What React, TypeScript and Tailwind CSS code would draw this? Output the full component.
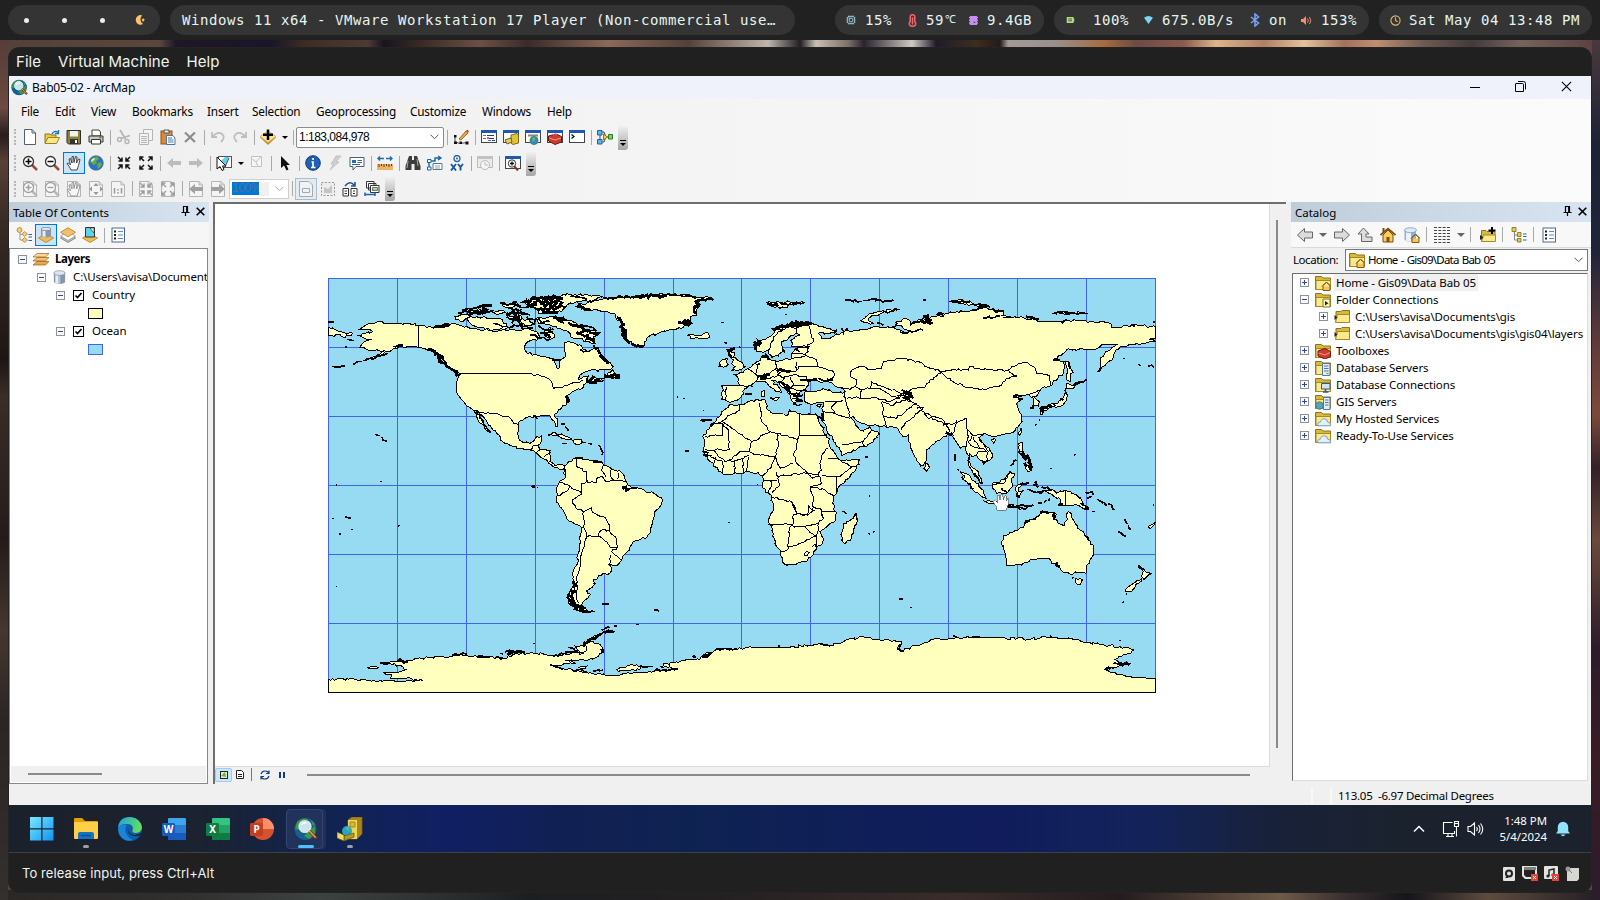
import React from "react";
import { Cpu, Clock } from "lucide-react";

type Kids = { children?: React.ReactNode };

/* ---------- world map ---------- */

type Region = { dx: number; dy: number; land: string[]; lines: string[]; specks: string[]; dense: string[] };

const regions: Region[] = [
  {
    dx: -24,
    dy: -24,
    land: [
      "150,160 170,157 187,155 205,160 240,160 296,166 320,172 345,170 365,165 395,161 420,166 440,170 455,175 480,180 500,176 520,185 545,180 575,178 600,183 625,176 640,182 655,192 665,206 640,208 620,218 613,232 622,250 650,255 680,262 700,266 704,278 712,296 720,292 718,272 735,262 738,250 735,235 733,218 745,215 765,220 785,228 790,240 805,245 822,235 835,250 850,268 870,278 880,290 862,300 805,303 780,315 775,328 790,320 805,318 800,332 820,342 855,325 830,325 818,318 808,330 790,345 782,358 765,362 750,372 740,382 744,395 738,405 715,420 705,432 712,455 714,470 706,470 697,450 690,437 665,437 645,440 620,442 600,452 595,470 593,490 598,510 610,518 630,520 643,510 650,500 665,498 665,512 655,525 660,540 690,542 692,560 690,575 705,587 718,583 735,587 730,598 705,592 685,580 670,565 650,550 630,540 600,537 565,522 540,510 538,495 520,480 505,465 490,440 478,430 460,420 440,408 425,390 412,372 410,350 412,330 422,312 400,300 385,288 370,270 350,255 330,242 310,235 296,233 270,230 245,228 225,235 205,245 170,260 130,272 170,255 190,243 150,240 120,232 128,220 155,208 130,203 112,196 135,190 158,185 148,177 120,177 130,170",
      "462,422 475,432 485,450 498,470 510,486 500,482 485,462 473,445",
      "765,108 800,100 840,88 870,82 930,82 980,75 1040,72 1080,75 1120,80 1180,86 1140,92 1125,100 1140,108 1128,120 1130,135 1110,140 1110,160 1090,172 1050,178 1015,190 985,200 968,232 945,225 925,212 905,185 910,165 890,150 885,132 860,124 820,120 785,118",
      "1100,197 1110,192 1130,195 1165,190 1170,200 1145,207 1120,205",
      "605,97 640,88 690,80 750,73 810,77 850,80 810,92 770,95 740,105 725,125 690,130 655,130 650,115 630,105",
      "648,145 680,142 700,140 740,150 780,165 800,180 840,188 820,200 825,220 800,215 780,205 760,205 745,185 720,175 690,165 655,160",
      "440,145 470,140 540,145 550,160 570,175 520,180 480,172 455,165",
      "405,140 435,132 450,140 430,155 408,150",
      "565,142 600,135 605,155 580,152",
      "600,150 625,148 640,160 615,170",
      "668,190 690,172 705,200 690,208",
      "855,318 878,300 885,312 900,315 898,325 870,320",
      "25,173 60,183 98,190 75,203 55,195 25,198",
      "683,495 705,487 730,495 755,507 735,507 715,497",
      "758,512 775,508 798,517 780,522 762,520",
      "545,105 570,100 590,105 570,115",
      "445,125 480,118 500,128 470,132",
      "520,128 550,122 560,130 535,133",
    ],
    lines: [
      "422,310 520,310",
      "520,310 615,310 640,315 670,318 695,335 700,355 730,350 770,338 790,330",
      "462,420 490,428 525,430 545,438 565,440 580,460 595,465",
      "630,540 640,525 655,525",
      "660,540 648,548",
      "672,562 692,545",
      "296,166 296,185",
      "296,185 296,233",
    ],
    specks: [
      "425,120 445,115 470,117", "540,100 560,104 595,102", "455,128 520,124", "560,112 605,118", "575,128 605,128 630,135", "600,110 640,112 655,122", "620,140 645,150 640,165", "655,145 665,160 690,155", "655,165 680,180 700,176", "700,145 730,142 740,152", "775,192 800,200 815,212", "770,165 800,168 830,182", "520,160 560,170", "590,120 600,160 610,180", "575,98 590,97", "630,195 660,203 690,208", "770,110 800,116 815,122", "950,80 1010,74 1070,76", "850,83 950,80", "1060,72 1130,82", "1130,90 1180,86", "560,140 590,150 575,160", "570,170 600,165 640,175", "700,110 735,108", "750,80 800,88",
      "345,240 372,262", "135,270 205,250", "100,283 125,275", "36,290 75,288", "25,156 42,156", "220,228 250,226", "80,208 102,212", "74,230 80,231", "740,375 745,400", "640,437 652,446", "695,270 722,270", "820,225 850,262", "800,325 812,340 850,330", "865,318 900,320", "470,425 490,465", "495,475 512,488", "166,493 180,497", "186,502 200,514", "722,462 735,462", "735,470 745,482", "727,520 742,521", "803,520 815,522", "835,525 845,540 846,555", "183,634 187,634", "48,645 50,645", "635,648 645,652", "765,565 790,562", "820,575 845,575", "905,655 950,655", "1070,381 1074,381", "1088,385 1094,385", "1096,543 1106,544", "1205,157 1212,157", "1148,421 1152,422", "1142,450 1155,455", "1213,217 1220,219", "415,128 440,122", "780,238 800,244", "660,190 700,186",
    ],
    dense: [
      "470,110 490,106 515,106", "485,115 505,122", "612,94 650,86 700,80", "640,94 700,96 720,90", "660,100 690,106 715,98", "655,120 700,116 730,100", "665,128 715,128", "620,98 650,104", "665,88 730,86", "440,128 500,126", "560,128 590,132", "600,125 620,132", "575,148 600,145", "580,105 600,110", "700,146 735,150", "745,158 775,168",
      "890,142 905,155 915,165", "898,172 915,180 918,195 905,180", "905,190 915,205 928,215", "935,222 960,230 970,228",
      "1125,92 1140,108 1122,118 1128,132", "1075,158 1105,152 1112,160 1090,162", "950,79 1000,77 1040,76",
      "325,237 350,252 372,262", "350,262 375,280 392,294", "355,272 365,280", "392,296 420,314", "765,165 790,178 812,192", "790,200 820,210 822,218", "770,185 835,190", "820,320 815,338 840,330", "738,378 742,398", "855,312 895,320", "345,170 390,165", "770,110 810,118", "838,255 868,278", "672,195 690,205",
    ],
  },
  {
    dx: -24,
    dy: 546,
    land: [
      "735,17 745,5 760,-5 772,-8 790,0 815,2 845,5 850,15 870,22 905,37 920,65 930,78 955,85 985,97 1010,105 1027,122 1020,140 1003,163 997,190 992,215 978,235 940,245 930,262 918,280 905,300 892,316 865,312 875,325 870,340 835,348 830,358 820,360 825,372 812,385 800,392 812,403 795,420 785,435 800,450 770,450 750,435 745,415 748,395 760,370 758,340 770,315 775,280 780,240 785,203 765,192 742,178 725,145 708,115 710,95 715,72 735,55 733,30",
      "25,657 110,660 215,663 310,662 260,655 212,655 215,645 190,637 230,637 262,630 240,615 180,610 240,605 290,597 345,590 385,592 440,585 500,592 560,595 580,583 640,580 700,585 740,583 790,580 780,565 800,550 820,545 845,560 850,575 835,590 800,602 735,600 765,610 730,612 700,618 740,628 800,637 865,648 930,640 1000,635 1075,627 1020,620 1060,607 1110,600 1140,598 1155,585 1185,570 1300,562 1410,562 1500,550 1530,558 1570,545 1630,530 1680,540 1745,545 1732,570 1750,573 1790,555 1840,538 1960,532 2040,532 2110,537 2190,532 2260,538 2300,548 2400,560 2443,570 2410,585 2385,598 2400,612 2430,610 2355,628 2420,650 2506,656 2506,697 25,697",
      "890,630 930,615 965,618 960,628 920,633",
      "765,558 795,552 800,572 780,577",
      "140,622 160,619 175,624 155,625",
      "775,622 800,618 785,627",
      "965,618 1000,619 980,623",
      "800,540 830,525 850,520 825,535",
    ],
    lines: [
      "920,65 905,60 880,62 858,65 848,50 830,55 828,68 800,65 785,70 785,102 765,115 758,130 775,150 790,155 815,143 818,158 850,170 868,195 868,212 888,235 893,260 875,275 905,300",
      "712,105 722,105 745,90 750,78 720,68",
      "750,78 780,95 785,100",
      "768,-5 770,20 800,35 803,65",
      "850,15 845,32 858,50",
      "875,25 870,45 880,60",
      "895,40 893,58",
      "790,155 792,180 790,200 800,230 835,228 845,210 868,212",
      "785,203 792,200",
      "835,228 860,245 870,262 893,260",
      "800,232 790,265 780,290 780,320 770,350 772,380 768,400 775,430",
      "868,312 872,285",
      "735,28 735,55",
    ],
    specks: [
      "910,90 920,78", "762,362 765,400", "780,450 826,455", "818,370 828,370", "1003,449 1018,453", "948,493 956,493", "882,497 890,497", "845,510 870,503", "825,530 855,516 885,514", "745,562 765,568", "735,575 775,572", "700,590 740,580", "555,577 590,573 615,575", "560,582 580,580", "540,580 550,582", "395,585 440,583", "470,590 510,590", "525,594 550,593", "180,610 200,612", "640,550 646,550", "1005,630 1070,627", "820,632 850,630", "1120,590 1128,590", "1150,585 1175,580", "1200,567 1220,565", "235,197 238,199", "36,175 42,175", "76,171 92,175", "94,208 98,208", "57,221 62,223", "49,378 52,380", "181,64 186,64", "48,75 51,75", "650,82 655,82", "1225,187 1230,187", "690,615 730,625", "755,628 800,634",
    ],
    dense: [
      "905,84 930,86", "757,365 766,380", "750,392 752,420 765,435", "752,405 758,425", "748,400 750,432", "762,430 780,440 792,448", "758,432 775,446", "765,440 800,455", "847,432 866,432", "635,78 643,80", "800,542 815,536 840,524", "855,517 880,514", "565,577 605,574", "232,605 262,602", "845,566 848,580", "795,545 790,560",
    ],
  },
  {
    dx: 1086,
    dy: -24,
    land: [
      "95,347 125,347 150,347 145,325 130,313 150,308 165,300 185,290 195,280 212,272 215,258 228,255 232,270 255,272 280,270 305,265 305,250 315,238 335,232 355,234 360,228 335,230 305,230 302,212 330,195 318,190 295,205 275,215 278,235 265,258 245,262 235,240 220,248 200,245 190,225 215,210 240,200 255,180 290,165 330,160 365,158 380,165 410,175 440,182 435,190 400,188 385,190 395,205 420,205 440,192 460,185 490,183 520,178 545,173 600,172 625,178 645,188 660,182 640,176 618,158 640,146 658,150 660,168 670,155 700,145 750,138 790,128 850,120 880,113 940,122 935,138 960,140 1000,143 1050,155 1120,155 1150,150 1200,155 1255,158 1265,172 1300,168 1340,165 1396,170 1396,205 1380,208 1395,215 1370,218 1330,225 1290,230 1275,245 1270,262 1250,280 1230,295 1232,262 1260,240 1285,222 1240,222 1215,238 1180,238 1130,240 1105,258 1090,270 1120,275 1125,290 1120,310 1100,330 1080,348 1055,355 1045,370 1030,380 1048,395 1045,408 1030,405 1030,385 1015,373 990,378 975,380 998,385 980,400 985,418 995,435 992,460 975,482 950,490 925,497 910,500 885,490 868,505 880,520 900,535 908,555 900,570 880,583 870,570 860,555 848,560 838,550 840,580 850,595 865,605 875,635 870,640 855,620 845,600 835,585 838,560 830,545 828,530 810,535 795,510 790,495 775,490 760,500 735,520 708,540 708,560 705,578 692,588 675,560 660,520 655,495 640,500 625,478 610,472 570,470 545,467 525,462 505,455 490,440 483,442 495,460 510,480 520,483 540,470 545,480 568,492 550,515 520,530 490,540 455,557 450,540 430,510 410,480 395,450 400,430 395,415 400,398 380,398 360,402 345,395 342,375 345,366 375,365 405,358 440,368 466,366 460,358 440,350 420,338 410,332 385,335 370,325 355,335 350,350 345,362 330,365 320,375 325,395 310,398 300,375 290,360 270,345 255,330 245,330 265,350 275,368 258,365 240,350 225,335 205,335 185,345 165,355 155,375 140,392 120,397 110,393 95,390 93,370 100,360",
      "118,403 145,405 180,393 225,390 232,420 260,430 290,438 298,420 330,430 380,435 385,448 395,470 410,495 420,530 440,560 455,572 510,568 500,595 480,620 450,645 430,680 428,700 437,735 435,755 410,770 390,785 400,805 398,820 380,830 370,855 350,875 320,882 285,883 278,865 260,830 250,790 235,755 250,715 245,680 220,655 218,640 220,615 195,610 170,605 135,608 100,613 75,590 60,575 40,548 42,520 38,500 60,470 80,450 95,425 110,415",
      "120,245 135,250 130,262 150,275 165,290 155,298 125,302 135,290 125,280 130,270 118,260",
      "85,290 95,270 112,265 115,285 100,292",
      "512,152 540,130 580,122 630,117 600,125 555,135 535,145 550,160 530,158",
      "230,98 270,97 290,95 340,97 310,105 270,115 245,108",
      "778,95 810,87 845,97 900,112 860,108 800,98",
      "1090,130 1120,123 1150,127 1190,130 1140,132",
      "1125,275 1135,275 1150,308 1140,310 1140,335 1130,330 1132,300",
      "1130,340 1155,345 1172,338 1150,355 1130,355",
      "1125,355 1132,375 1120,405 1090,410 1060,420 1050,415 1075,405 1095,400 1115,388 1125,370",
      "1050,415 1062,420 1058,433 1050,432",
      "985,490 993,473 995,485 988,497",
      "903,510 918,508 912,520",
      "985,520 998,518 995,545 1005,552 990,545",
      "1008,590 1025,580 1025,600 1015,605",
      "705,578 718,592 710,603 702,595",
      "812,606 830,612 855,635 880,660 888,685 875,680 850,660 830,635",
      "907,640 930,637 960,605 975,612 965,635 968,650 955,665 945,672 920,670 908,655",
      "243,385 268,383 260,392", "215,365 222,362 222,378 215,378", "380,408 395,403 388,412", "310,402 335,404 322,406",
    ],
    lines: [
      "148,405 150,420 120,435 95,455 65,460", "60,470 72,460 98,460 98,495 45,500", "98,460 115,480 118,538 62,540", "98,455 185,515 240,485 215,455 210,400", "240,485 262,490 322,508 328,495 328,430", "328,495 412,495", "322,508 320,535 310,555 320,580 350,608 385,615 395,600 390,580 400,550 415,535", "185,515 178,545 150,545 118,570 105,575 75,545 45,540", "178,545 195,555 255,560 265,530 262,490", "255,560 245,590 220,615", "255,560 270,595 310,580", "258,605 265,620 320,612 350,610 365,625", "265,620 270,645 245,670", "220,632 260,632", "415,565 440,565 455,575 485,590 500,590", "485,590 455,615 440,620 395,615", "440,620 440,665", "365,625 390,620 395,640 362,650 370,690", "362,650 405,660 432,680", "245,683 275,688 305,695 320,730 345,735",
      "100,575 98,613", "135,572 132,608", "158,568 160,605", "175,560 170,605", "75,560 72,590", "60,560 85,572 100,575", "105,575 135,572 165,560 178,555", "240,630 245,645 235,665",
      "495,350 500,330 480,315 485,300 510,290 540,298 575,295 580,275 635,265 685,275 715,292 755,305", "755,305 790,298 835,300 840,288 870,297 920,302 955,300 985,280 1010,278 1030,290 1040,310 1080,318 1082,345", "755,308 790,335 830,352 885,360 935,345 950,325 980,318 960,308 955,300", "755,305 710,340 705,352 670,355 640,370 665,375", "640,370 665,395 690,410 710,440 760,460 790,462 830,445 830,475 848,495 885,490", "540,355 545,335 590,355 620,365 640,370", "495,350 515,360 510,385", "515,360 540,355 570,355 610,380 630,385", "510,385 560,383 600,395 625,385", "440,350 480,358 495,350", "460,365 470,400 480,440", "470,385 500,380 510,385", "575,395 580,440 590,470", "575,395 600,405 650,390 665,395", "580,440 620,445 650,420 680,400", "680,415 700,412 665,445 645,460 635,480", "405,395 440,395 460,390", "400,425 435,430 480,445", "435,430 425,410 440,395", "455,525 480,520 520,515 545,480", "518,515 525,530", "830,475 835,500 830,530", "850,500 865,530 890,545", "865,500 880,520 895,545 890,575", "765,460 780,485 775,470", "800,450 790,490", "848,495 835,515 850,530 870,535", "860,555 865,545 890,545", "710,440 705,430 760,450 765,460", "625,385 640,370 650,362", "620,375 665,380", "1015,373 1045,360",
      "150,347 190,350", "175,298 205,320 200,335", "205,280 200,310", "255,272 260,295 240,310 205,318", "260,295 300,305 318,303 320,275", "205,320 240,325 260,318 285,320", "318,303 325,290 385,290 430,305 435,315 410,332", "285,320 310,315 350,320 355,335", "290,345 320,362 345,358", "305,250 345,255 355,245 350,230 370,215 355,165", "345,255 380,270 385,290", "240,240 245,215 265,185 300,170 320,175 320,190", "355,165 320,172", "108,350 105,390", "285,320 275,335 290,345", "300,320 310,345 290,360", "305,265 345,260", "260,320 270,308 318,303", "310,345 345,345", "908,645 940,640 960,610",
    ],
    specks: [
      "465,90 515,94", "520,92 560,85", "555,95 610,90", "700,89 708,90", "270,98 300,102 345,97", "245,178 280,176", "665,160 700,148", "690,150 730,160", "845,118 885,112", "865,103 895,108", "905,120 940,125", "930,138 880,145", "940,142 970,142", "785,92 840,95", "1100,124 1130,130 1195,130", "1115,160 1130,148", "1320,168 1335,170", "630,185 655,188", "625,160 615,170", "455,175 460,195", "465,180 475,175", "660,183 700,180", "560,160 580,165", "225,252 240,268", "120,255 128,265", "88,280 92,290", "265,335 285,348", "285,350 300,372", "300,370 325,372", "305,385 340,375", "320,380 340,395", "240,382 250,388", "165,372 185,372", "200,285 210,280", "150,230 148,235", "100,157 94,157", "105,217 110,219", "280,238 284,250", "315,235 330,245", "330,330 380,330", "385,325 400,332 430,328", "38,421 42,422", "33,450 65,450", "35,545 55,550", "45,560 65,556", "635,360 650,372 665,370", "640,365 670,378", "645,380 670,385", "760,465 775,462", "795,553 794,573", "525,560 533,561", "1138,275 1140,295", "1150,345 1190,328", "1125,360 1128,372", "1090,400 1095,408", "1055,410 1065,415 1085,408", "1030,405 1020,415", "985,545 998,555", "980,570 962,588", "1085,593 1082,597", "1153,553 1156,556", "1035,465 1040,462", "1046,452 1050,448", "1298,265 1304,267", "1345,283 1352,288", "1375,288 1392,292", "1220,305 1235,293", "1390,155 1396,157", "975,375 995,380", "985,390 1000,388", "880,575 895,570", "800,598 808,600", "815,620 820,628", "830,640 850,658", "855,610 868,630", "935,655 950,665", "435,185 440,178", "285,133 290,133", "1090,268 1110,270", "540,677 538,680", "200,643 205,644", "400,425 398,445", "380,436 395,445", "395,430 403,452", "1110,385 1120,390", "605,170 615,170",
    ],
    dense: [
      "232,100 262,108", "250,180 280,170 310,164", "290,164 330,160 365,160", "192,215 215,222", "190,222 196,240", "700,140 725,150", "740,136 760,134", "690,152 728,158", "1010,145 1045,150", "215,258 235,260", "110,242 132,240", "115,250 124,262", "308,378 335,378", "318,388 335,392", "40,553 55,556", "640,366 662,368", "768,487 788,490", "1000,548 1010,570", "1005,562 1020,580", "995,552 1003,565", "1015,575 1024,592", "1003,578 1012,590", "1010,555 1022,572", "1015,585 1020,600", "1090,268 1108,270", "1052,412 1060,428", "290,345 296,360", "210,325 240,315", "260,305 300,300", "640,380 660,388", "300,168 345,164", "970,380 980,378",
    ],
  },
  {
    dx: 1086,
    dy: 516,
    land: [
      "497,190 502,205 490,240 482,270 465,282 455,270 458,240 460,222 485,208",
      "1065,122 1085,118 1100,130 1125,120 1160,135 1180,160 1195,178 1175,172 1155,162 1125,168 1105,165 1112,150 1090,138",
      "880,152 910,155 950,168 990,168 950,171 900,160",
      "978,110 1000,100 1018,98 985,112 985,125 1000,120 990,135 980,140",
      "940,258 960,247 985,240 1003,225 1015,212 1035,205 1052,190 1080,187 1100,193 1092,208 1110,222 1125,225 1135,185 1145,200 1155,220 1170,240 1190,260 1210,285 1212,300 1200,330 1190,350 1188,370 1165,368 1140,372 1120,368 1108,350 1100,345 1085,340 1075,325 1050,325 1020,330 1000,340 975,345 950,345 948,325 942,300 935,280",
      "1155,385 1178,388 1172,403 1158,400",
      "1345,345 1358,355 1385,370 1370,380 1362,388 1355,380 1360,365",
      "1355,385 1345,400 1325,425 1305,425 1315,410 1335,398",
      "1375,230 1396,217 1390,228 1380,236",
      "985,172 1005,175 990,180",
    ],
    lines: [
      "370,150 368,180 355,165 352,195 330,190 310,195 308,225 235,222", "308,225 300,230 292,300 270,303", "308,228 345,230 375,260 345,275 320,285 295,290", "345,230 385,220 382,250 375,262", "385,220 400,205 395,185 435,185", "382,250 380,290", "343,310 350,304 357,308 352,316 344,316 343,310", "370,170 390,175 400,205", "367,290 375,282 378,292", "352,195 375,180", "1127,122 1127,140", "1127,140 1127,168", "305,155 320,190",
    ],
    specks: [
      "950,165 985,168 1015,165", "1000,178 1030,165", "955,170 985,172", "985,105 1018,97", "980,130 990,142", "1010,118 1040,128 1060,120", "1030,105 1045,112", "1040,125 1055,130", "1055,110 1085,122", "1045,160 1055,158", "1062,158 1070,150", "1080,145 1076,152", "1185,127 1205,125 1210,135", "1190,145 1205,138", "1170,160 1195,178", "1222,148 1238,160", "1235,155 1250,168", "1255,162 1272,180", "1305,208 1312,222", "1315,225 1322,240", "1285,245 1308,258", "1388,165 1392,166", "1208,183 1213,186", "1003,220 1020,208", "1030,205 1038,208", "1050,188 1075,186", "1090,190 1092,208", "1100,335 1105,350", "1148,380 1150,385", "1185,258 1195,268", "937,285 942,288", "628,446 640,446", "660,472 665,472", "415,428 416,430", "1298,455 1300,458", "1288,570 1292,572", "1308,432 1312,430", "115,217 119,217", "537,137 540,138", "535,250 540,252", "549,246 554,244", "455,185 468,192", "1270,642 1320,640", "622,600 630,585", "640,603 625,596", "5,620 15,618", "75,600 95,598", "110,598 140,596", "1080,557 1085,560", "870,98 878,100", "1345,345 1352,352", "388,580 400,584 420,588", "265,588 270,588", "790,558 800,560", "845,560 870,560", "498,190 500,210", "1105,165 1120,160", "1210,285 1210,300",
    ],
    dense: ["35,620 60,610", "1097,345 1108,350", "1036,94 1040,106", "1005,216 1018,212", "1245,658 1262,656", "1185,172 1195,178", "1285,642 1305,642", "945,155 952,166", "1090,192 1094,206", "1345,348 1352,352"],
  },
];

/* Subdivides a polyline and offsets the new vertices to give an uneven coast. */
function coast(src: string, close: boolean, amp: number): string {
  const p = src.split(" ").map((s) => s.split(",").map(Number));
  if (close) p.push(p[0]);
  let seed = Math.abs(p[0][0] * 31 + p[0][1] * 17) % 9973;
  const rnd = () => {
    seed = (seed * 1103 + 12345) % 65521;
    return seed / 65521 - 0.5;
  };
  let d = `M${p[0][0]} ${p[0][1]}`;
  for (let i = 1; i < p.length; i++) {
    const [ax, ay] = p[i - 1];
    const [bx, by] = p[i];
    const n = Math.min(14, Math.floor(Math.hypot(bx - ax, by - ay) / 7));
    const straight = n > 0 && (ax === bx || ay === by || (by > 650 && bx > 2400));
    if (!straight)
      for (let k = 1; k < n; k++) {
        const t = k / n;
        d += `L${(ax + (bx - ax) * t + rnd() * amp).toFixed(1)} ${(ay + (by - ay) * t + rnd() * amp).toFixed(1)}`;
      }
    d += `L${bx} ${by}`;
  }
  return close ? d + "Z" : d;
}

const steps = Array.from({ length: 11 }, (_, i) => (i + 1) * 207);

function WorldMap() {
  return (
    <svg className="block" width="829" height="416" viewBox="0 0 2487 1248" shapeRendering="crispEdges" fill="none">
      <rect x="1.5" y="1.5" width="2481" height="1242" fill="#97dbf2" stroke="#4065eb" strokeWidth="3" />
      {steps.map((v) => (
        <path key={v} stroke="#4065eb" strokeWidth="3" d={`M${v + (v >= 1242 ? -1.5 : 1.5)} 0V1243${v < 1242 ? `M0 ${v + 1.5}H2483` : ""}`} />
      ))}
      <g stroke="#000" strokeWidth="3">
        {regions.map((r, i) => (
          <g key={i} transform={`translate(${r.dx} ${r.dy})`}>
            {r.land.map((s, k) => (
              <path key={k} d={coast(s, true, 8)} fill="#ffffbe" />
            ))}
          </g>
        ))}
        {regions.map((r, i) => (
          <g key={i} transform={`translate(${r.dx} ${r.dy})`}>
            {r.lines.map((s, k) => (
              <path key={k} d={coast(s, false, 6)} />
            ))}
            {r.specks.map((s, k) => (
              <path key={k} d={coast(s, false, 9)} strokeWidth="5" />
            ))}
            {r.dense.map((s, k) => (
              <path key={k} d={coast(s, false, 14)} strokeWidth="8" />
            ))}
          </g>
        ))}
      </g>
      <g transform="translate(1086 516)">
        <path d="M921 180L918 168L908 155L916 152L922 158L921 138L927 136L930 150L932 134L938 134L940 150L944 137L949 139L950 152L953 144L957 146L955 162L949 180Z" fill="#fff" stroke="#555" strokeWidth="2" />
      </g>
    </svg>
  );
}

/* ---------- icons ---------- */

function Svg({ s = 16, children }: { s?: number } & Kids) {
  return (
    <svg width={s} height={s} viewBox="0 0 16 16" fill="none" className="block shrink-0">
      {children}
    </svg>
  );
}

const page = (c: string) => <path d="M2.5.5H10L13.500 4V15.500H2.500Z M10 .5V4H13.500" fill="#fff" stroke={c} />;
const greyPage = <path d="M1.500.5H11L14.500 4V15.500H1.500Z M11 .5V4H14.500" fill="#f4f4f4" stroke="#b4b4b4" />;
const win = (
  <>
    <rect x=".5" y="1.5" width="15" height="12" fill="#fff" stroke="#444" />
    <path d="M0 1H16V4H0Z" fill="#1f57b5" />
  </>
);
const fold = (
  <>
    <path d="M.5 14.500V1.500H6.500L8 3H15.500V14.500Z" fill="#d8b93c" stroke="#8a741c" />
    <path d="M1 14.500V5.500H15.500V14.500Z" fill="#fbe98e" stroke="#a38a25" />
  </>
);
const house = <path d="M7 11.500L11.500 7L16 11.500M8 10.500V15.500H15V10.500L11.500 7.500Z" fill="#f3c75a" stroke="#8a5a10" />;
const arrowsIn = "M2 2L6 6M6 2.500V6H2.500M14 2L10 6M10 2.500V6H13.500M2 14L6 10M6 13.500V10H2.500M14 14L10 10M10 13.500V10H13.500";
const arrowsOut = "M6 6L2 2M2 5.500V2H5.500M10 6L14 2M14 5.500V2H10.500M6 10L2 14M2 10.500V14H5.500M10 10L14 14M14 10.500V14H10.500";
const handPath = "M5 15L3.500 12L1 8.500L2.500 8L4.500 10L3 4L4.500 3.500L6 8L6 1.500H7.500L8 7.500L9.500 1.500L11 2L10.500 8L12.500 4L14 4.500L12.500 10.500L11 15Z";

function lens(sign: string, c: string, h: string) {
  return (
    <>
      <path d="M10 10L15 15" stroke={h} strokeWidth="2.500" />
      <circle cx="6.500" cy="6.500" r="5" fill="#fff" stroke={c} strokeWidth="1.300" />
      <path d={sign} stroke={c === "#333" ? "#000" : c} strokeWidth="1.600" />
    </>
  );
}
const plus = "M3.500 6.500H9.500M6.500 3.500V9.500";
const minus = "M3.500 6.500H9.500";
const G = "#b4b4b4";
const arrowL = "M1 8L7 3V6H15V10H7V13Z";
const arrowR = "M15 8L9 3V6H1V10H9V13Z";
const bigL = "M.5 8L7.500 1.500V5H15.500V11H7.500V14.500Z";
const bigR = "M15.500 8L8.500 1.500V5H.5V11H8.500V14.500Z";
const globe = (
  <>
    <circle cx="8" cy="8" r="7.300" fill="#2a74c8" stroke="#3b5e85" strokeWidth=".6" />
    <path d="M4 3L9 1.500L11 4L8 6L9 8L6 10L2 7ZM9 9L13 7L14 10L10 14Z" fill="#6cab3c" />
    <path d="M3 5L6 3L7 4L4 7Z" fill="#d5ecf9" />
  </>
);
const cylinder = (
  <>
    <path d="M2 3V13Q8 17 14 13V3Z" fill="#8795ab" />
    <path d="M3.500 4V14L7 15V5Z" fill="#e6edf5" />
    <path d="M7 4V15H9V4Z" fill="#b5c2d4" />
    <ellipse cx="8" cy="3.200" rx="6" ry="2.500" fill="#dfe6ef" stroke="#7a879b" strokeWidth=".7" />
  </>
);
const diamond = (y: number, f: string, s: string) => <path d={`M8 ${y}L15.5 ${y + 4.5}L8 ${y + 9}L.5 ${y + 4.5}Z`} fill={f} stroke={s} strokeWidth=".8" />;
const listIcon = (
  <>
    <rect x="2" y="1" width="12.500" height="14" fill="#fff" stroke="#4e6a8c" />
    <path d="M4 4.500H6M4 8H6M4 11.500H6" stroke="#222" strokeWidth="2" />
    <path d="M8 4.500H13M8 8H13M8 11.500H13" stroke="#5c8cc4" />
  </>
);

const I: Record<string, React.ReactNode> = {
  new: page("#4e6076"),
  open: <><path d="M1 14V5H6L7 6H12V8" fill="#e7cb4b" stroke="#8a741c" /><path d="M1 14.500L4 8.500H15.500L12.500 14.500Z" fill="#fbe68a" stroke="#9a8320" /><path d="M8 5Q10 1 14 3M14.500 1V4.500H11" stroke="#1d6fc0" strokeWidth="1.300" /></>,
  save: <><path d="M1 1.500H14.500V15H2.500L1 13.500Z" fill="#8f8231" stroke="#2d2d2d" /><path d="M4 2H12V7.500H4Z" fill="#f0f0f0" /><path d="M4 10H12V15H4Z" fill="#333" /><path d="M9 11H11V14H9Z" fill="#fff" /></>,
  print: <><path d="M4 1H11L12.500 3V7H4Z" fill="#fff" stroke="#444" /><path d="M1 7H15V13H1Z" fill="#c7cbbd" stroke="#333" /><path d="M3.500 10.500H12.500V15H3.500Z" fill="#fff" stroke="#333" /><path d="M11 8.500H13.500" stroke="#3d9c2e" strokeWidth="1.500" /></>,
  cut: <><path d="M4 1L9.500 10M14 6.500L5 9.500" stroke="#b5b5b5" strokeWidth="1.800" /><circle cx="3.500" cy="10.500" r="2" stroke={G} strokeWidth="1.400" /><circle cx="11" cy="12.500" r="2" stroke={G} strokeWidth="1.400" /></>,
  copy: <><path d="M5.500.5H14.500V11.500H5.500Z" fill="#f4f4f4" stroke={G} /><path d="M1.500 4.500H10.500V15.500H1.500ZM3 7.500H9M3 9.500H9M3 11.500H9M3 13.500H9" fill="#f4f4f4" stroke={G} /></>,
  paste: <><rect x="1" y="2" width="11" height="13" fill="#dc8a33" stroke="#8b5214" /><path d="M4 1H9V4H4Z" fill="#eee" stroke="#555" /><path d="M6.500 6.500H13L15 9V15.500H6.500ZM8 9H12M8 11H13.500M8 13H13.500" fill="#fff" stroke="#4b76a8" /></>,
  del: <path d="M3 3.500L13 13M13 3.500L3 13" stroke="#8d8d8d" strokeWidth="2.300" />,
  undo: <path d="M2 3V8H7M2.500 7.500Q8 2 12 5T11 13" stroke="#bdbdbd" strokeWidth="1.800" />,
  redo: <path d="M14 3V8H9M13.500 7.500Q8 2 4 5T5 13" stroke="#bdbdbd" strokeWidth="1.800" />,
  add: <><path d="M0 8.500L8 4L16 8.500L8 16Z" fill="#c8922d" /><path d="M0 7.500L8 2L16 7.500L8 13.500Z" fill="#fae3a0" stroke="#c8922d" strokeWidth=".6" /><path d="M8 .5V11M3 5.700H13" stroke="#000" strokeWidth="2.500" /></>,
  edit: <><path d="M2 7V13L7 14.500L14 13.500" stroke="#222" strokeWidth=".8" /><path d="M6 10L13 2L15 4L8 11Z" fill="#f0a43a" stroke="#6a4a1d" strokeWidth=".7" /><path d="M13 2L15 4L16 2L14 .5Z" fill="#d8403a" /><path d="M1 6H3.500V8.500H1ZM1 12.500H4V15H1ZM6.500 12.500H9V15H6.500ZM12.500 12.500H15.500V15.500H12.500Z" fill="#111" /></>,
  wToc: <>{win}<path d="M2 6.500H5M2 9.500H5M7 11.500H10" stroke="#3c78d0" /><path d="M6 6.500H13M8 9.500H13M11 11.500H14" stroke="#1a3d88" /><path d="M6 9H8" stroke="#e22" strokeWidth="1.500" /></>,
  wCat: <>{win}<path d="M8 6L14 4.500L15.500 6V14L10 15.500L8 14Z" fill="#e0c435" stroke="#7c6815" /><path d="M2 11L8 9L9 13L4 15Z" fill="#e5d05a" stroke="#6d6020" /></>,
  wSearch: <>{win}<path d="M3 6.500H13" stroke="#888" strokeWidth="2" /><circle cx="9" cy="11.500" r="4" fill="#3a85cc" stroke="#386" /><path d="M7 9L10 8L10 11L8 13Z" fill="#6cbc4c" /></>,
  wBox: <>{win}<path d="M1.500 7L9 5L14.500 7.500V13L8 15.500L1.500 12Z" fill="#cf3a2e" stroke="#73150f" /><path d="M2 9L8 11L14 9M6 6Q8 3 10 6" stroke="#f3c5bd" strokeWidth=".7" /></>,
  wPy: <>{win}<path d="M2.500 5.500L5 7.500L2.500 9.500" stroke="#111" strokeWidth="1.300" /></>,
  model: <><path d="M3 5V12M4 3H7L9 8H13M4 13H7L9 8" stroke="#444" /><path d="M.5 1.500H5V6H.5ZM.5 10.500H5V15H.5Z" fill="#62b2ee" stroke="#1d62a8" /><path d="M6.500 5L10.500 8L6.500 11Z" fill="#f4d544" stroke="#8a741c" /><path d="M11.500 5.500H15.500V10H11.500Z" fill="#7cd05e" stroke="#2b7b1f" /></>,
  zin: lens(plus, "#333", "#9a4b3c"),
  zout: lens(minus, "#333", "#9a4b3c"),
  hand: <path d={handPath} fill="#fff" stroke="#333" strokeWidth=".9" />,
  globe,
  fin: <path d={arrowsIn} stroke="#111" strokeWidth="1.500" />,
  fout: <path d={arrowsOut} stroke="#111" strokeWidth="1.500" />,
  left: <path d={arrowL} fill="#bcbcbc" />,
  right: <path d={arrowR} fill="#bcbcbc" />,
  sel: <><rect x="2.500" y="1.500" width="13" height="11" fill="#fff" stroke="#555" /><path d="M3 8L9 2H13L9 12Z" fill="#5bd0ef" /><path d="M13 3L9 12" stroke="#444" /><path d="M1 2V14L4 11.500L6 15.500L8 14.500L6.500 11H10Z" fill="#fff" stroke="#111" /></>,
  unsel: <path d="M2.500 1.500H12.500V11.500H2.500ZM3 4L7 7L12 2M7 7L9 11" stroke="#c2c2c2" fill="#f6f6f6" />,
  ptr: <path d="M4 1V13L7 10.500L9.500 15.500L11.500 14.500L9.500 10H13Z" fill="#111" />,
  info: <><circle cx="8" cy="8" r="7.300" fill="#2160b4" stroke="#123a7c" /><path d="M8 3V5M6.500 7H8V12M6 12.500H10.500" stroke="#fff" strokeWidth="1.700" /></>,
  bolt: <path d="M9 1L14 1L9 7H12L3 15L6.500 9H4Z" fill="#cfcfcf" stroke="#b8b8b8" strokeWidth=".7" />,
  html: <><path d="M1 2.500H15V11.500H7L4 15V11.500H1Z" fill="#fff" stroke="#456078" /><path d="M3 5H7V8H3Z" fill="#1d6fc0" /><path d="M8.500 5.500H13M8.500 7.500H13M3 9.500H11" stroke="#456078" /></>,
  ruler: <><path d="M1 3.500H7M3 1.500L1 3.500L3 5.500M9 3.500H15M13 1.500L15 3.500L13 5.500" stroke="#1d6fa8" strokeWidth="1.400" /><path d="M0 9H16V15H0Z" fill="#edb469" /><path d="M2 9V12M4.500 9V11M7 9V12M9.500 9V11M12 9V12M14.500 9V11" stroke="#5e3a10" /></>,
  bino: <><path d="M4 1H7V5H9V1H12L15.500 11V15H9.500V9H6.500V15H.5V11Z" fill="#3d3d3d" /><path d="M3 6L2 13M12 4L13 11" stroke="#aaa" /></>,
  route: <><path d="M2 14V6H8V3H13M11 1L14 3L11 5" stroke="#1c66a6" strokeWidth="1.400" /><path d="M.5 4.500H4V7.500H.5ZM.5 12H4V15H.5Z" fill="#fff" stroke="#1c66a6" /><path d="M6 8.500H15V14.500H6Z" fill="#fff" stroke="#5a7790" /><path d="M8 11H13M8 13H13" stroke="#8aa" /></>,
  xy: <><circle cx="8" cy="3.500" r="3" stroke="#1c66a6" strokeWidth="1.300" /><circle cx="8" cy="3.500" r="1" fill="#1c66a6" /><path d="M2 9L7 15.500M7 9L2 15.500M9 9L11.500 12L14 9M11.500 12V15.500" stroke="#15599c" strokeWidth="1.900" /></>,
  time: <><path d="M.5 1.500H15.500V12.500H.5Z" fill="#ececec" stroke="#bbb" /><path d="M0 1H16V4H0Z" fill="#c2c2c2" /><circle cx="8" cy="10" r="4.500" fill="#f5f5f5" stroke="#bbb" /><path d="M8 7V10H11" stroke="#bbb" /></>,
  wZoom: <>{win}<path d="M9 11L13 15.500" stroke="#8b2d22" strokeWidth="2" /><circle cx="7" cy="8.500" r="3.700" fill="#fff" stroke="#333" /><path d="M5 8.500H9M7 6.500V10.500" stroke="#111" strokeWidth="1.300" /></>,
  pzin: <>{greyPage}{lens(plus, "#a0a0a0", "#b8b8b8")}</>,
  pzout: <>{greyPage}{lens(minus, "#a0a0a0", "#b8b8b8")}</>,
  phand: <>{greyPage}<path d={handPath} fill="#f6f6f6" stroke="#989898" /></>,
  pfull: <>{greyPage}<path d="M8 2L10.500 5H5.500ZM8 14L10.500 11H5.500ZM1 8L4 5.500V10.500ZM15 8L12 5.500V10.500Z" fill="#959595" /></>,
  p11: <>{greyPage}<path d="M4.500 7V12.500M11.500 7V12.500M8 8V9.500M8 11V12.500" stroke="#9a9a9a" strokeWidth="1.500" /></>,
  pin2: <>{greyPage}<path d={arrowsIn} stroke="#9c9c9c" strokeWidth="1.400" /></>,
  pout2: <>{greyPage}<path d={arrowsOut} stroke="#9c9c9c" strokeWidth="1.400" /></>,
  pl: <>{greyPage}<path d={arrowL} fill="#a0a0a0" /></>,
  pr: <>{greyPage}<path d={arrowR} fill="#a0a0a0" /></>,
  dash: <path d="M1.500.5H11L14.500 4V15.500H1.500ZM4.500 7.500H11.500V11.500H4.500Z" fill="#eef3f8" stroke="#a8a8a8" />,
  focus: <><path d="M1.500 1.500H14.500V14.500H1.500Z" stroke="#999" strokeDasharray="2 1.500" fill="#eee" /><path d="M4 12V6L8 8L12 4V12Z" fill="#c4c4c4" /></>,
  toggle: <><path d="M3 5Q8-1 12 4M13 1V5H9" stroke="#1f5690" strokeWidth="1.600" /><path d="M1 7.500H6.500V15H1ZM9 7.500H15V15H9Z" fill="#fff" stroke="#333" /><path d="M2.500 10H5M2.500 12.500H5M11 10H13M11 12.500H13" stroke="#333" /></>,
  ddp: <><path d="M2.500.5H10V7H2.500ZM4.500 2.500H12V9H4.500Z" fill="#fff" stroke="#333" /><path d="M6.500 4.500H15V11.500H6.500Z" fill="#fff" stroke="#333" /><path d="M8.500 6.500H13.500V9.500H8.500Z" fill="#a9d987" stroke="#444" strokeWidth=".7" /><path d="M1 11.500V15M1 13.500H11M11 11.500V15" stroke="#1d62c0" strokeWidth="1.500" /></>,
  t1: <><path d="M4 4V13H8M4 7.500H8" stroke="#999" /><circle cx="3.500" cy="3" r="2.500" fill="#f3ca7c" stroke="#b98627" strokeWidth=".8" /><path d="M8.500 4.500L11.500 7L8.500 9.500L6 7ZM8.500 10.500L11.500 13L8.500 15.500L6 13Z" fill="#f3ca7c" stroke="#b98627" strokeWidth=".8" /><path d="M12.500 7.500H16M12.500 10H16M12.500 13.500H16" stroke="#2068b0" strokeWidth="1.200" /></>,
  t2: <>{diamond(6.500, "#f0bd55", "#b57b1d")}<path d="M3 1.500V9Q8 12 13 9V1.500Z" fill="#8997ad" /><path d="M4.500 2V9.500L7.500 10V2Z" fill="#e4ebf4" /><ellipse cx="8" cy="2" rx="5" ry="1.700" fill="#dde4ee" stroke="#667" strokeWidth=".6" /></>,
  t3: <>{diamond(6.500, "#bcbcbc", "#777")}{diamond(4.500, "#fff", "#999")}{diamond(.8, "#f4c069", "#b57b1d")}</>,
  t4: <>{diamond(6.500, "#f0bd55", "#b57b1d")}<path d="M3.500.5H12.500V10H3.500Z" fill="#5fd2e8" stroke="#333" /><path d="M8 1H12V6Z" fill="#fff" stroke="#333" strokeWidth=".7" /></>,
  list: listIcon,
  layers: <><path d="M0 14L4 10.500H16L12.500 14Z" fill="#e8a94a" stroke="#9b6013" strokeWidth=".7" /><path d="M0 10L4 6.500H16L12.500 10Z" fill="#f3c176" stroke="#9b6013" strokeWidth=".7" /><path d="M0 6L4 2.500H16L12.500 6Z" fill="#fbd79b" stroke="#9b6013" strokeWidth=".7" /></>,
  cyl: cylinder,
  backG: <path d={bigL} fill="#dcdcdc" stroke="#666" />,
  fwdG: <path d={bigR} fill="#dcdcdc" stroke="#666" />,
  up: <path d="M6.500 1L12 7H9V10H15V14.500H4.500V7H1Z" fill="#dcdcdc" stroke="#666" />,
  home: <><path d="M3 8V15H13V8L8 3Z" fill="#f5cf57" stroke="#7a4c10" /><path d="M.5 8L8 1.500L15.500 8" stroke="#7a4c10" strokeWidth="1.700" /><path d="M6.500 10H9.500V15H6.500Z" fill="#8a4a12" /><path d="M3.500 1V5" stroke="#7a4c10" strokeWidth="2" /></>,
  dbhome: <><path d="M.5 3V13Q6 17 12 13V3Z" fill="#8fb2d8" /><path d="M2 4V14L7 15V5Z" fill="#eaf2fa" /><ellipse cx="6.500" cy="3.200" rx="6" ry="2.500" fill="#dfeaf6" stroke="#6d8fb5" strokeWidth=".7" />{house}</>,
  table: <path d="M0 .5H16M0 3.500H16M0 6.500H16M0 9.500H16M0 12.500H16M0 15.500H16" stroke="#444" strokeDasharray="3 1.330" />,
  addf: <><path d="M1.500 14V3.500H6L7 4.500H15V14Z" fill="#d8b93c" stroke="#8a741c" /><path d="M1.500 14.500L3.500 8H15.500V14.500Z" fill="#fbe98e" stroke="#a38a25" /><path d="M12 0V7M8.500 3.500H15.500" stroke="#000" strokeWidth="2" /><path d="M0 8V13L3.500 10.500Z" fill="#222" /></>,
  tree2: <><path d="M3.500 4V13H7M3.500 8H7" stroke="#888" /><path d="M1 .5H5V4.500H1ZM6.500 5.500H10V9.500H6.500ZM6.500 11.500H10V15H6.500Z" fill="#e7cb4b" stroke="#7d6815" strokeWidth=".8" /><path d="M12 7H15.500M12 9.500H15.500M12 13H15.500" stroke="#2068b0" strokeWidth="1.200" /></>,
  fhome: <>{fold}{house}</>,
  fconn: <>{fold}<path d="M8 7H15V15H8Z" fill="#fff7c8" stroke="#8a741c" /><path d="M10 9V13.500L13.500 11.300Z" fill="#222" /></>,
  flink: <><path d="M2 13V2.500H7L8 1.500H15.500V13Z" fill="#d8b93c" stroke="#8a741c" /><path d="M1.500 13.500L3.500 5.500H15.500V13.500Z" fill="#fbe98e" stroke="#a38a25" /><path d="M.5 6V11L3.500 8.500Z" fill="#222" /></>,
  fbox: <>{fold}<path d="M3 8L10 5.500L15.500 8.500V13.500L10 16L3 13Z" fill="#d23c2f" stroke="#73150f" /><path d="M3.500 10L10 12L15 9.500" stroke="#f3c5bd" strokeWidth=".7" /></>,
  fsrv: <>{fold}<path d="M7.500 3.500H15V15.500H7.500ZM9 6H13.500M9 8.500H13.500M9 11H13.500" fill="#e4ecf6" stroke="#5177a6" /><path d="M11.500 13.500H13.500" stroke="#3a3" /></>,
  fdb: <>{fold}<path d="M6.500 6.500H15V12H6.500Z" fill="#cfe2f7" stroke="#35577f" /><path d="M10.500 12V15M8 15H13.500" stroke="#35577f" strokeWidth="1.500" /></>,
  fgis: <>{fold}<path d="M8.500 3.500H15V15.500H8.500ZM10 6H13.500M10 8.500H13.500M10 11H13.500" fill="#e4ecf6" stroke="#5177a6" /><circle cx="4.500" cy="11.500" r="3.700" fill="#57a0c8" stroke="#3d8a68" /></>,
  fcloud: <>{fold}<path d="M3 14.800Q2 11 5.500 11Q6.500 7 10 8Q12.500 8 12.500 11Q15.800 11 15.800 14.800Z" fill="#e4f1fc" stroke="#7aa2c8" /></>,
};

const Arc = ({ s }: { s: number }) => (
  <svg width={s} height={s} viewBox="0 0 24 24" fill="none" className="shrink-0">
    <circle cx="11.500" cy="12" r="11" fill="#14608f" />
    <path d="M3 5Q8 0 14 2L9 7L6 13L1 12ZM15 14L21 9L21 17L15 22L10 19ZM17 3L21 7L19 9Z" fill="#3d9a48" />
    <circle cx="11" cy="9.500" r="5.800" fill="#c8e4f1" stroke="#dfe5e9" strokeWidth="1.600" />
    <path d="M7.500 8Q9.500 5 12.500 6" stroke="#fff" strokeWidth="1.500" />
    <path d="M15.500 14L22.500 21.500" stroke="#7b3d1d" strokeWidth="3.200" />
    <path d="M15 13.500L21.500 20.500" stroke="#eba35b" strokeWidth="1.300" />
  </svg>
);

/* ---------- toolbar pieces ---------- */

const Sep = () => (
  <span className="flex w-[6px] shrink-0 justify-center">
    <span className="h-[15px] w-px bg-[#a9a9a9]" />
  </span>
);
const Drop = () => (
  <span className="flex w-[11px] shrink-0 justify-center">
    <span className="border-x-[3px] border-t-[3px] border-x-transparent border-t-black" />
  </span>
);
const GreyDrop = () => (
  <span className="flex w-[13px] shrink-0 justify-center">
    <span className="border-x-[4px] border-t-[4px] border-x-transparent border-t-[#666]" />
  </span>
);
const Btn = ({ n, on, soft }: { n: string; on?: boolean; soft?: boolean }) => (
  <span
    className={
      "flex h-[22px] w-[22px] shrink-0 items-center justify-center " +
      (on ? "border border-[#0078d7] bg-[#cce4f7]" : soft ? "border border-[#a9bdcf] bg-[#e2ecf5]" : "")
    }
  >
    <Svg>{I[n]}</Svg>
  </span>
);
const Grip = () => <span className="ml-[5px] mr-[3px] h-[16px] w-0 shrink-0 border-l-2 border-dotted border-[#b5b5b5]" />;
const End = () => (
  <span className="ml-[2px] flex h-[24px] w-[10px] shrink-0 flex-col items-center justify-end gap-[2px] self-end rounded-br-[3px] bg-gradient-to-b from-[#f0f0f0] to-[#a5a5a5] pb-[4px]">
    <span className="h-px w-[6px] bg-black" />
    <span className="border-x-[3px] border-t-[3px] border-x-transparent border-t-black" />
  </span>
);
function Items({ list }: { list: string }) {
  return (
    <>
      {list.split(" ").map((n, i) =>
        n === "|" ? <Sep key={i} /> : n === "v" ? <Drop key={i} /> : <Btn key={i} n={n.replace(/[*~]/, "")} on={n.endsWith("*")} soft={n.endsWith("~")} />,
      )}
    </>
  );
}
const Chevron = ({ c = "#555" }: { c?: string }) => (
  <svg width="9" height="6" viewBox="0 0 9 6" fill="none" className="shrink-0">
    <path d="M.5.7L4.500 4.700L8.500.7" stroke={c} />
  </svg>
);
const Pin = () => (
  <svg width="9" height="10" viewBox="0 0 9 10" fill="none">
    <path d="M2.500 6V.5H6.500V6M.5 6.500H8.500M4.500 6.500V10M5.700 1V6" stroke="#000" strokeWidth="1.200" />
  </svg>
);
const Cross = ({ s = 9 }: { s?: number }) => (
  <svg width={s} height={s} viewBox="0 0 9 9" fill="none">
    <path d="M.7.7L8.300 8.300M8.300.7L.7 8.300" stroke="#000" strokeWidth={s > 9 ? 0.9 : 1.6} />
  </svg>
);
const Expand = ({ open }: { open?: boolean }) => (
  <svg width="9" height="9" viewBox="0 0 9 9" fill="none" className="shrink-0">
    <rect x=".5" y=".5" width="8" height="8" fill="#fafafa" stroke="#919191" />
    <path d={open ? "M2 4.500H7" : "M2 4.500H7M4.500 2V7"} stroke="#2b4a9b" />
  </svg>
);
const Check = () => (
  <svg width="11" height="11" viewBox="0 0 11 11" fill="none" className="shrink-0">
    <rect x=".5" y=".5" width="10" height="10" fill="#fff" stroke="#000" />
    <path d="M2.500 5.500L4.500 7.500L8.500 3" stroke="#000" strokeWidth="1.700" />
  </svg>
);
const PanelHead = ({ t }: { t: string }) => (
  <div className="flex h-[20px] shrink-0 items-center bg-gradient-to-r from-[#bfcddb] to-[#d8e4f1] pl-[4px] pr-[4px]">
    <span className="flex-1 pt-[2px] text-[11.5px] leading-[18px]">{t}</span>
    <span className="flex items-center gap-[6px] pb-[2px]"><Pin /><Cross /></span>
  </div>
);

/* ---------- panels ---------- */

function Toc() {
  return (
    <div className="flex w-[200px] shrink-0 flex-col">
      <PanelHead t="Table Of Contents" />
      <div className="flex h-[26px] shrink-0 items-center bg-[#f6f6f6] pl-[4px]">
        <Items list="t1 t2* t3 t4 | list" />
      </div>
      <div className="flex h-[536px] w-[199px] flex-col overflow-hidden border border-[#828790] bg-white pt-px text-[11.5px] leading-[18px]">
        <div className="flex h-[18px] items-center gap-[6px] pl-[8px] font-bold"><Expand open /><Svg>{I.layers}</Svg><span className="tracking-[-0.45px]">Layers</span></div>
        <div className="flex h-[18px] items-center gap-[6px] whitespace-nowrap pl-[27px]"><Expand open /><Svg s={15}>{I.cyl}</Svg><span className="tracking-[-0.12px]">C:\Users\avisa\Document</span></div>
        <div className="flex h-[18px] items-center gap-[8px] pl-[46px]"><Expand open /><Check /><span>Country</span></div>
        <div className="flex h-[18px] items-center pl-[78px]"><span className="h-[11px] w-[15px] border border-black bg-[#ffffbe]" /></div>
        <div className="flex h-[18px] items-center gap-[8px] pl-[46px]"><Expand open /><Check /><span>Ocean</span></div>
        <div className="flex h-[18px] items-center pl-[78px]"><span className="h-[11px] w-[15px] border border-[#4065eb] bg-[#97dbf2]" /></div>
        <div className="mx-px mb-px mt-auto flex h-[16px] items-center bg-[#f0f0f0] pl-[17px]"><span className="h-[2px] w-[74px] bg-[#8a8a8a]" /></div>
      </div>
    </div>
  );
}

function MapView() {
  return (
    <div className="ml-[4px] flex h-[582px] w-[1073px] shrink-0 flex-col border-l-2 border-t-2 border-[#6e6e6e] bg-[#f0f0f0]">
      <div className="flex h-[563px] shrink-0">
        <div className="w-[1055px] border-b border-r border-[#dcdcdc] bg-white pl-[113px] pt-[74px]"><WorldMap /></div>
        <div className="flex-1 pl-[6px] pt-[16px]"><div className="h-[528px] w-[2px] bg-[#8a8a8a]" /></div>
      </div>
      <div className="flex h-[15px] shrink-0 items-center">
        <span className="flex h-[14px] w-[17px] items-center justify-center rounded-[2px] border border-[#99cdf5] bg-[#cce6fb]">
          <svg width="8" height="8" viewBox="0 0 8 8"><rect x=".5" y=".5" width="7" height="7" fill="#e8eeb5" stroke="#222" /><path d="M1 5L5 1L6 6Z" fill="#6caa60" /></svg>
        </span>
        <span className="flex w-[16px] justify-center"><svg width="8" height="9" viewBox="0 0 8 9" fill="none"><path d="M.5.5H5.500L7.500 2.500V8.500H.5ZM2 4.500H6M2 6.500H6" fill="#fff" stroke="#222" /></svg></span>
        <span className="ml-[3px] h-[13px] w-px bg-[#777]" />
        <span className="ml-[8px] flex w-[10px]"><svg width="10" height="10" viewBox="0 0 10 10" fill="none"><path d="M1 4Q2 1 5 1T8.500 3M9 .5V3.500H6M9 6Q8 9 5 9T1.500 7M1 9.500V6.500H4" stroke="#123f7a" strokeWidth="1.200" /></svg></span>
        <span className="ml-[9px] flex gap-[2px]"><span className="h-[6px] w-[2px] bg-[#123f7a]" /><span className="h-[6px] w-[2px] bg-[#123f7a]" /></span>
        <span className="ml-[22px] h-[2px] w-[943px] bg-[#8a8a8a]" />
      </div>
    </div>
  );
}

const catalog: [string, string, boolean, number][] = [
  ["fhome", "Home - Gis09\\Data Bab 05", false, 0],
  ["fconn", "Folder Connections", true, 0],
  ["flink", "C:\\Users\\avisa\\Documents\\gis", false, 1],
  ["flink", "C:\\Users\\avisa\\Documents\\gis\\gis04\\layers", false, 1],
  ["fbox", "Toolboxes", false, 0],
  ["fsrv", "Database Servers", false, 0],
  ["fdb", "Database Connections", false, 0],
  ["fgis", "GIS Servers", false, 0],
  ["fcloud", "My Hosted Services", false, 0],
  ["fcloud", "Ready-To-Use Services", false, 0],
];

function CatalogPanel() {
  return (
    <div className="ml-[5px] flex w-[300px] shrink-0 flex-col">
      <PanelHead t="Catalog" />
      <div className="flex h-[26px] shrink-0 items-center border-b border-[#dadada] bg-[#f8f8f8] pl-[3px]">
        <Btn n="backG" /><GreyDrop />
        <span className="w-[2px]" /><Btn n="fwdG" /><span className="w-px" /><Btn n="up" /><span className="w-px" /><Btn n="home" /><span className="w-[2px]" /><Btn n="dbhome" />
        <Sep /><span className="w-[2px]" /><Btn n="table" /><span className="w-px" /><GreyDrop /><Sep />
        <span className="w-[4px]" /><Btn n="addf" /><Sep /><span className="w-[3px]" /><Btn n="tree2" /><Sep /><span className="w-[2px]" /><Btn n="list" />
      </div>
      <div className="flex h-[24px] shrink-0 items-center pl-[2px] text-[11.500px]">
        <span className="w-[52px] tracking-[-0.45px]">Location:</span>
        <div className="flex h-[22px] w-[243px] items-center border border-[#7a7a7a] bg-white pl-[3px] pr-[4px]">
          <Svg>{I.fhome}</Svg>
          <span className="ml-[3px] flex-1 tracking-[-0.8px] [word-spacing:1px]">Home - Gis09\Data Bab 05</span>
          <Chevron />
        </div>
      </div>
      <div className="ml-px mt-[1px] flex h-[508px] w-[296px] flex-col overflow-hidden border border-[#dcdcdc] border-l-[#6e6e6e] border-t-[#6e6e6e] bg-white text-[11.500px] tracking-[-0.1px]">
        {catalog.map(([ic, t, open, lv], i) => (
          <div key={i} className={"flex h-[17px] shrink-0 items-center whitespace-nowrap " + (lv ? "pl-[26px]" : "pl-[7px]")}>
            <Expand open={open} />
            <span className="ml-[6px]"><Svg s={16}>{I[ic]}</Svg></span>
            <span className={"ml-[3px] pl-[2px] pr-[2px] leading-[17px] " + (i === 0 ? "bg-[#f0f0f0]" : "")}>{t}</span>
          </div>
        ))}
      </div>
    </div>
  );
}

/* ---------- taskbar ---------- */

const Office = ({ l, a, b, c, round }: { l: string; a: string; b: string; c: string; round?: boolean }) => (
  <span className="relative flex h-[24px] w-[24px]">
    <svg width="24" height="24" viewBox="0 0 24 24" className="absolute inset-0">
      {round ? (
        <><circle cx="13" cy="12" r="11" fill={b} /><path d="M13 1A11 11 0 0 1 24 12H13Z" fill={a} /></>
      ) : (
        <><rect x="6" y="1" width="18" height="22" rx="1.500" fill={b} /><path d="M6 2Q6 1 7.500 1H22.500Q24 1 24 2.500V8H6Z" fill={a} /><path d="M6 16H24V21.500Q24 23 22.500 23H7.500Q6 23 6 21.500Z" fill={c} /></>
      )}
      <rect x="0" y="6" width="13" height="13" rx="1.200" fill={c} />
    </svg>
    <span className="relative mt-[6px] w-[13px] text-center text-[10px] font-bold leading-[13px] text-white">{l}</span>
  </span>
);

const Slot = ({ children, mark }: Kids & { mark?: string }) => (
  <span className="flex h-[40px] w-[44px] shrink-0 flex-col items-center justify-start pt-[8px]">
    {children}
    <span className={"mt-[4px] h-[3px] rounded-full " + (mark ?? "w-0")} />
  </span>
);

function Taskbar() {
  return (
    <div className="flex h-[48px] shrink-0 items-center border-b border-[#3d4148] bg-[linear-gradient(90deg,#1b212b_0%,#1b2230_12%,#112350_20%,#101f63_28%,#112052_35%,#0e2252_43%,#101c5c_62%,#13235a_72%,#182139_80%,#1b222e_88%)] pl-[11px] text-white">
      <Slot><svg width="24" height="24" viewBox="0 0 24 24"><defs><linearGradient id="wn" x1="0" y1="0" x2="1" y2="1"><stop stopColor="#7be8fd" /><stop offset="1" stopColor="#0e93f5" /></linearGradient></defs><path d="M0 0H11.300V11.300H0ZM12.500 0H23.500V11.300H12.500ZM0 12.500H11.300V23.500H0ZM12.500 12.500H23.500V23.500H12.500Z" fill="url(#wn)" /></svg></Slot>
      <Slot mark="w-[6px] bg-[#9a9ea6]"><svg width="24" height="24" viewBox="0 0 24 24"><path d="M0 2Q0 1 1 1H8L11 4H23Q24 4 24 5V12H0Z" fill="#e2a100" /><rect x="0" y="5" width="24" height="17" rx="1" fill="#ffcf4a" /><path d="M4 22V17Q4 15 6 15H18Q20 15 20 17V22Z" fill="#1474c4" /><path d="M7 18.500H17" stroke="#0b528f" strokeWidth="1.500" /></svg></Slot>
      <Slot><svg width="24" height="24" viewBox="0 0 24 24"><defs><linearGradient id="ed" x1="0" y1="0" x2="1" y2=".3"><stop stopColor="#1ba0e0" /><stop offset="1" stopColor="#62dc63" /></linearGradient></defs><circle cx="12" cy="12" r="12" fill="#0d5fae" /><path d="M0 11Q1 0 12 0Q23 1 24 11Q23 16 17 16Q13 15 15 12Q15 7 9 7Q2 7 0 11Z" fill="url(#ed)" /><path d="M0 12Q2 7 9 8Q6 11 8 16Q10 21 15 23Q6 26 1 17Z" fill="#1c84d8" /><path d="M10 12Q10 17 16 18Q20 18.500 24 15L22 18.500Q18 20 14 18.500Q9 16 10 12Z" fill="#1b222e" /></svg></Slot>
      <Slot><Office l="W" a="#41a5ee" b="#2b7cd3" c="#185abd" /></Slot>
      <Slot><Office l="X" a="#33c481" b="#21a366" c="#107c41" /></Slot>
      <Slot><Office l="P" a="#ff8f6b" b="#d35230" c="#c43e1c" round /></Slot>
      <span className="ml-[2px] flex h-[40px] w-[37px] items-center justify-center rounded-[4px] border border-[#33456e] bg-[#22325a] pl-[3px] shadow-[3px_0_0_#20305a]">
        <Slot mark="w-[16px] bg-[#4cc2ff]"><Arc s={24} /></Slot>
      </span>
      <span className="ml-[5px]" />
      <Slot mark="w-[6px] bg-[#9a9ea6]"><svg width="26" height="24" viewBox="0 0 26 24"><path d="M11 3L15 0H25V17L20 22H11Z" fill="#a8871a" stroke="#7d6312" strokeWidth=".8" /><path d="M11 3H20V22H11Z" fill="#ecd65a" /><path d="M13 5H18V10H13Z" fill="#d8bb35" stroke="#84701a" strokeWidth=".7" /><circle cx="10" cy="14" r="5" fill="#2aa3c4" /><path d="M8 11L12 10L12 14Z" fill="#63c07c" /><path d="M7 19V24L17 20V16Z" fill="#b39a28" stroke="#6d5a12" strokeWidth=".8" /><path d="M0 15L7 18V24L0 21Z" fill="#f0dc62" stroke="#6d5a12" strokeWidth=".8" /></svg></Slot>
      <span className="flex-1" />
      <svg width="12" height="8" viewBox="0 0 12 8" fill="none"><path d="M1 6.500L6 1.500L11 6.500" stroke="#fff" strokeWidth="1.500" /></svg>
      <svg className="ml-[17px]" width="18" height="18" viewBox="0 0 18 18" fill="none"><path d="M10.500 2.500H1.500V13.500H12.500V11M6 13.500V16.500M10 13.500V16.500M4 16.500H12M12.500 1.500H16.500V6.500H12.500ZM14.500 6.500V16.500M12.500 3.500H16.500" stroke="#fff" strokeWidth="1.100" /></svg>
      <svg className="ml-[7px]" width="18" height="16" viewBox="0 0 18 16" fill="none"><path d="M1 5.500H3.500L7.500 2V14L3.500 10.500H1ZM9.500 6Q11 8 9.500 10M11.500 4Q14.500 8 11.500 12M13.500 2.500Q18 8 13.500 13.500" stroke="#fff" strokeWidth="1.100" /></svg>
      <div className="ml-[8px] flex w-[54px] flex-col items-end text-[11.4px] leading-[16px]"><span>1:48 PM</span><span>5/4/2024</span></div>
      <svg className="ml-[9px] mr-[21px]" width="14" height="16" viewBox="0 0 14 16"><path d="M0 12.500L1.800 10V6A5.200 5.200 0 0 1 12.200 6V10L14 12.500ZM4.500 13.500H9.500Q7 17 4.500 13.500Z" fill="#94e2fb" /></svg>
    </div>
  );
}

/* ---------- desktop bar ---------- */

const Pill = ({ children, w }: Kids & { w: string }) => (
  <div className={"flex h-[30px] shrink-0 items-center rounded-[15px] bg-[#343434] " + w}>{children}</div>
);

function DesktopBar() {
  return (
    <div className="flex h-[40px] shrink-0 items-center bg-[#212121] px-[8px] font-['DejaVu_Sans_Mono',monospace] text-[14px] tracking-[0.57px] text-[#e6f4f2]">
      <Pill w="w-[152px] pl-[16px] gap-[33px]">
        <span className="h-[5px] w-[5px] rounded-full bg-[#e4f1ee]" />
        <span className="h-[5px] w-[5px] rounded-full bg-[#e4f1ee]" />
        <span className="h-[5px] w-[5px] rounded-full bg-[#e4f1ee]" />
        <svg width="10" height="10" viewBox="0 0 10 10" className="-ml-[3px]"><path d="M7 .3A4.800 4.800 0 1 0 8 9Q5.500 7.500 5.500 5T7 .3Z" fill="#fdc36b" /><path d="M8 3L9 4.300L10 4.800L9 5.500L8 7L7 5.500L6.500 4.800L7.500 4.300Z" fill="#fdc36b" /></svg>
      </Pill>
      <Pill w="ml-[10px] w-[625px] pl-[12px] whitespace-nowrap">Windows 11 x64 - VMware Workstation 17 Player (Non-commercial use…</Pill>
      <span className="flex-1" />
      <Pill w="w-[209px] pl-[11px]">
        <Cpu size={10} color="#9fd3e0" strokeWidth={2} />
        <span className="ml-[9px] w-[43px]">15%</span>
        <svg width="9" height="15" viewBox="0 0 10 15" fill="none"><path d="M2.500 8.500V3Q2.500 1 5 1T7.500 3V8.500Q9 10 8.500 12Q7.500 14 5 14T1.500 12Q1 10 2.500 8.500ZM5 4V12" stroke="#f2666b" strokeWidth="1.700" /></svg>
        <span className="ml-[9px] w-[28px]">59</span>
        <span className="-ml-[9px] w-[24px] text-[11px]">℃</span>
        <svg width="9" height="9" viewBox="0 0 10 10"><path d="M1 0H9V10H1ZM0 1H10V2.500H0ZM0 4H10V5.500H0ZM0 7H10V8.500H0Z" fill="#c78df0" /><path d="M5 7H7" stroke="#343434" /></svg>
        <span className="ml-[9px]">9.4GB</span>
      </Pill>
      <Pill w="ml-[10px] w-[315px] pl-[12px]">
        <svg width="9" height="6" viewBox="0 0 10 8"><path d="M0 0H9V2H10V6H9V8H0Z" fill="#b4dd7f" /><path d="M2 2.500H7M2 5H7" stroke="#343434" /></svg>
        <span className="ml-[18px] w-[51px]">100%</span>
        <svg width="9" height="8" viewBox="0 0 10 9"><path d="M0 2Q5-2 10 2L5 9Z" fill="#7ed4f7" /></svg>
        <span className="ml-[9px] w-[88px]">675.0B/s</span>
        <svg width="10" height="14" viewBox="0 0 10 14" fill="none"><path d="M1 4L8.500 10L5 13V1L8.500 4L1 10" stroke="#74a2f7" strokeWidth="1.600" /></svg>
        <span className="ml-[9px] w-[32px]">on</span>
        <svg width="11" height="9" viewBox="0 0 11 9" fill="none"><path d="M0 3H2L5 0V9L2 6H0Z" fill="#f58f6e" /><path d="M6.500 2.500Q8 4.500 6.500 6.500M8.500 1Q11 4.500 8.500 8" stroke="#f58f6e" /></svg>
        <span className="ml-[9px]">153%</span>
      </Pill>
      <Pill w="ml-[10px] w-[213px] pl-[11px]">
        <Clock size={11} color="#e6b566" strokeWidth={2.400} />
        <span className="ml-[8px] whitespace-nowrap">Sat May 04 13:48 PM</span>
      </Pill>
    </div>
  );
}

const menu = ["File", "Edit", "View", "Bookmarks", "Insert", "Selection", "Geoprocessing", "Customize", "Windows", "Help"];
const menuW = ["w-[34px]", "w-[36px]", "w-[41px]", "w-[75px]", "w-[45px]", "w-[64px]", "w-[94px]", "w-[72px]", "w-[65px]", "w-[40px]"];

const wallpaper =
  "[background:linear-gradient(180deg,#4a3632_0%,#6b4a42_12%,#2a1c1c_15%,#5a4036_18%,#3a2c26_24%,#1e1614_40%,#3b2d27_44%,#241b1a_60%,#46372f_70%,#2b2524_80%,#34302d_100%)_left/8px_100%_no-repeat,linear-gradient(180deg,#5b4240_0%,#1d2236_16%,#202439_28%,#5e3b3a_38%,#7a4b3c_46%,#33202a_52%,#6a4a3c_60%,#2c1b2a_72%,#3a1b26_84%,#2a1d2c_100%)_right/8px_100%_no-repeat,linear-gradient(90deg,#2b2725_0%,#31302f_12%,#3d4341_20%,#26292a_30%,#1c1f22_33%,#242021_45%,#3a2c2a_60%,#241c1e_70%,#6e5a48_80%,#3a3030_84%,#15151b_88%,#5d4b3e_93%,#231d24_100%)_bottom/100%_10px_no-repeat,linear-gradient(90deg,#53413a_0%,#5a463c_10%,#1d1726_11%,#1a1528_17%,#3d2c26_19%,#4d3a33_23%,#171420_24%,#352724_26%,#6d5045_30%,#3b2a2a_33%,#8b6a57_38%,#54403a_43%,#bfb6ae_48%,#211e22_50%,#c9bfb6_51%,#7d716a_53%,#2a2230_54%,#cfc8c2_57%,#1f1b2a_58.500%,#3f2e1d_61%,#231a1a_62.500%,#a39a96_63%,#9a8f8c_66%,#a66b3f_69%,#6d4a45_71%,#8d5a4c_74%,#e0b489_76%,#b07f66_79%,#e6c39a_81.500%,#a3715c_84%,#c18e70_86%,#6d5a52_89%,#43393c_92%,#75645d_95%,#5b3d3e_100%)]";

export default function App() {
  return (
    <div className={"flex h-[900px] w-[1600px] flex-col overflow-hidden font-['Noto_Sans','Open_Sans',sans-serif] text-black " + wallpaper}>
      <DesktopBar />
      <div className="mx-[8px] mt-[7px] flex h-[846px] flex-col overflow-hidden rounded-[11px] border border-[#232323] bg-[#202020]">
        <div className="flex h-[28px] shrink-0 items-center gap-[17px] pl-[7px] font-['Inter',sans-serif] text-[15px] tracking-[0.06px] text-[#eef4f3]">
          <span>File</span><span>Virtual Machine</span><span>Help</span>
        </div>
        <div className="flex h-[729px] shrink-0 flex-col bg-[#f0f0f0]">
          <div className="flex h-[23px] shrink-0 items-center bg-[#eff2fa] pl-[2px] pr-[19px]">
            <Arc s={17} />
            <span className="ml-[4px] flex-1 text-[12px] tracking-[-0.2px]">Bab05-02 - ArcMap</span>
            <span className="mr-[35px] h-px w-[10px] bg-black" />
            <svg className="mb-[2px] mr-[35px]" width="11" height="11" viewBox="0 0 11 11" fill="none"><path d="M.5 3Q.5 2.500 1 2.500H7.500Q8.500 2.500 8.500 3.500V10.500H.5ZM3 .5H8.500Q10.500.5 10.500 2.500V8.500" stroke="#000" /></svg>
            <span className="pb-[2px]"><Cross s={11} /></span>
          </div>
          <div className="flex h-[103px] shrink-0 flex-col bg-gradient-to-r from-[#efefef] to-[#fbfbfb]">
            <div className="flex h-[25px] items-center pl-[12px] text-[11.8px] tracking-[-0.2px]">
              {menu.map((m, i) => <span key={m} className={menuW[i]}>{m}</span>)}
            </div>
            <div className="flex h-[26px] items-center">
              <Grip />
              <Items list="new open save print | cut copy paste del | undo redo | add v |" />
              <div className="flex h-[21px] w-[148px] items-center justify-between rounded-[2px] border border-[#8c8c8c] bg-white pb-px pl-[2px] pr-[4px] font-['Liberation_Sans',sans-serif] text-[12px] tracking-[-0.5px]">1:183,084,978<Chevron /></div>
              <Items list="| edit | wToc wCat wSearch wBox wPy | model" />
              <End />
            </div>
            <div className="flex h-[26px] items-center">
              <Grip />
              <Items list="zin zout hand* globe | fin fout | left right | sel v unsel | ptr | info bolt html | ruler | bino route xy | time | wZoom" />
              <End />
            </div>
            <div className="flex h-[25px] items-center">
              <Grip />
              <Items list="pzin pzout phand pfull p11 | pin2 pout2 | pl pr" />
              <div className="flex h-[20px] w-[60px] items-center border border-[#cfcfcf] bg-white pl-[2px] pr-[4px] font-['Liberation_Sans',sans-serif] text-[12px]">
                <span className="h-[13px] w-[27px] bg-[#0078d7] leading-[13px] tracking-[-0.5px] text-[#5b7088]">100%</span>
                <span className="h-[14px] w-[10px] bg-[#f0f0f0]" /><span className="flex-1" />
                <Chevron c="#aaa" />
              </div>
              <Items list="| dash~ focus toggle ddp" />
              <End />
            </div>
          </div>
          <div className="flex h-[582px] shrink-0"><Toc /><MapView /><CatalogPanel /></div>
          <div className="flex flex-1 items-center pt-[2px] text-[11.500px]">
            <span className="h-[17px] w-[1304px] border-r-2 border-[#f8f8f8]" />
            <span className="h-[17px] w-[19px] border-r-2 border-[#f8f8f8]" />
            <span className="whitespace-pre pl-[6px] tracking-[-0.25px]">113.05  -6.97 Decimal Degrees</span>
          </div>
        </div>
        <Taskbar />
        <div className="flex flex-1 items-center pl-[13px] pr-[8px] pt-[2px] font-['Inter',sans-serif] text-[13px] tracking-[0.08px] text-[#eef4f3]">
          <span className="flex-1">To release input, press Ctrl+Alt</span>
          <span className="flex items-center gap-[6px] pr-[3px]">
            <svg width="13" height="14" viewBox="0 0 13 14"><rect width="12" height="14" rx="1" fill="#e2e2e2" /><circle cx="6" cy="6.500" r="3" fill="none" stroke="#222" strokeWidth="2" /><path d="M2 11H5V8Z" fill="#222" /></svg>
            <svg width="16" height="15" viewBox="0 0 16 15"><path d="M0 0H15V13H3L0 10Z" fill="#e2e2e2" /><path d="M2 4V9L4 11H13V4Z" fill="#222" /><path d="M3 1V4M5 1V4M7 1V4M9 1V4M11 1V4M13 1V4" stroke="#222" /><rect x="9" y="8" width="7" height="7" fill="#e8433b" /><path d="M11 10L14 13M14 10L11 13" stroke="#fff" /></svg>
            <svg width="15" height="15" viewBox="0 0 15 15"><rect width="14" height="13" rx="1" fill="#e2e2e2" /><path d="M5 10V4L10 3V9" stroke="#222" strokeWidth="1.500" fill="none" /><circle cx="4" cy="10" r="1.600" fill="#222" /><circle cx="9" cy="9" r="1.600" fill="#222" /><rect x="8" y="8" width="7" height="7" fill="#e8433b" /><path d="M10 10L13 13M13 10L10 13" stroke="#fff" /></svg>
            <svg width="15" height="15" viewBox="0 0 15 15"><path d="M2 2H14V13L12 15H2Z" fill="#d5d7d0" /><circle cx="3" cy="3" r="2.500" fill="#999" /><path d="M4 4L7 7" stroke="#777" /></svg>
          </span>
        </div>
      </div>
    </div>
  );
}
